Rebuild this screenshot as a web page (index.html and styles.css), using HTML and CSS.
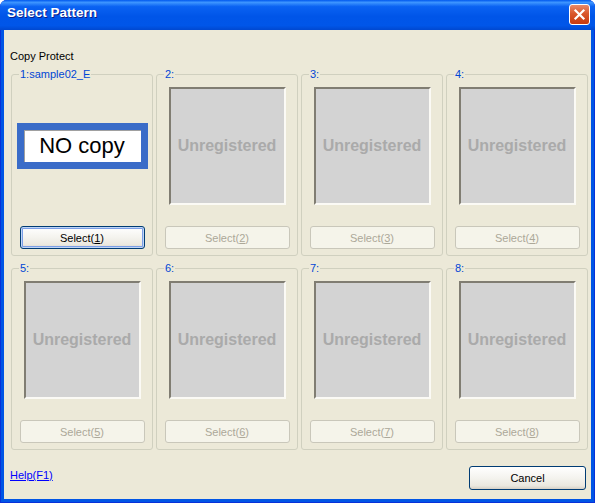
FILE: index.html
```html
<!DOCTYPE html>
<html lang="en">
<head>
    <meta charset="UTF-8">
    <meta name="viewport" content="width=device-width, initial-scale=1.0">
    <title>Select Pattern</title>
    <link rel="stylesheet" href="styles.css">
</head>
<body>
    <div class="window">
        <div class="titlebar">
            <span class="title">Select Pattern</span>
            <span class="close">
                <svg width="19" height="19" viewBox="0 0 19 19"><path d="M5.5 5.5 L13.5 13.5 M13.5 5.5 L5.5 13.5" stroke="#fff" stroke-width="2.2" stroke-linecap="square"/></svg>
            </span>
        </div>

        <div class="client">
            <div class="caption">Copy Protect</div>

            <div class="slots">
                <fieldset class="slot">
                    <legend>1:sample02_E</legend>
                    <div class="preview">
                        <div class="nocopy">NO copy</div>
                    </div>
                    <button class="btn focus">Select(<u>1</u>)</button>
                </fieldset>
                <fieldset class="slot">
                    <legend>2:</legend>
                    <div class="thumb">Unregistered</div>
                    <button class="btn" disabled>Select(<u>2</u>)</button>
                </fieldset>
                <fieldset class="slot">
                    <legend>3:</legend>
                    <div class="thumb">Unregistered</div>
                    <button class="btn" disabled>Select(<u>3</u>)</button>
                </fieldset>
                <fieldset class="slot">
                    <legend>4:</legend>
                    <div class="thumb">Unregistered</div>
                    <button class="btn" disabled>Select(<u>4</u>)</button>
                </fieldset>
                <fieldset class="slot">
                    <legend>5:</legend>
                    <div class="thumb">Unregistered</div>
                    <button class="btn" disabled>Select(<u>5</u>)</button>
                </fieldset>
                <fieldset class="slot">
                    <legend>6:</legend>
                    <div class="thumb">Unregistered</div>
                    <button class="btn" disabled>Select(<u>6</u>)</button>
                </fieldset>
                <fieldset class="slot">
                    <legend>7:</legend>
                    <div class="thumb">Unregistered</div>
                    <button class="btn" disabled>Select(<u>7</u>)</button>
                </fieldset>
                <fieldset class="slot">
                    <legend>8:</legend>
                    <div class="thumb">Unregistered</div>
                    <button class="btn" disabled>Select(<u>8</u>)</button>
                </fieldset>
            </div>

            <div class="footer">
                <a class="help" href="#">Help(F1)</a>
                <button class="btn cancel">Cancel</button>
            </div>
        </div>
    </div>
</body>
</html>
```

FILE: styles.css
```css
body {
    margin: 0;
    background: #fff;
    font-family: 'Liberation Sans', Arial, sans-serif;
    font-size: 11px;
    color: #000;
}

.window {
    width: 595px;
    height: 503px;
    display: flex;
    flex-direction: column;
    background: #0055e5;
    border-radius: 7px 7px 0 0;
    box-shadow: inset 1px 0 0 #0831d9, inset -1px 0 0 #0831d9, inset 0 -1px 0 #0831d9;
}

.titlebar {
    height: 30px;
    display: flex;
    justify-content: space-between;
    align-items: flex-start;
    padding: 0 5px 0 7px;
    border-radius: 7px 7px 0 0;
    background: linear-gradient(to bottom, #0058ee 0%, #3d95ff 8%, #0a62f2 22%, #0055e8 55%, #0056e9 85%, #0048d0 100%);
}

.title {
    margin-top: 5px;
    font-size: 13.5px;
    line-height: 16px;
    font-weight: bold;
    color: #fff;
    text-shadow: 1px 1px 0 #0a1e8a;
}

.close {
    margin-top: 4px;
    width: 19px;
    height: 19px;
    border: 1px solid #fff;
    border-radius: 3px;
    background: linear-gradient(to bottom, #e98a6b 0%, #d9572c 45%, #c83a10 100%);
    display: flex;
}

.client {
    height: 469px;
    margin: 0 4px 4px;
    background: #ece9d8;
    box-sizing: border-box;
}

.caption {
    padding: 20px 0 0 6px;
    line-height: 13px;
}

.slots {
    display: grid;
    grid-template-columns: repeat(4, 142px);
    column-gap: 3px;
    row-gap: 6px;
    margin: 5px 0 0 7px;
}

.slot {
    margin: 0;
    padding: 0 0 6px;
    min-width: 0;
    height: 188px;
    box-sizing: border-box;
    border: 1px solid #d0d0bf;
    border-radius: 3px;
    display: flex;
    flex-direction: column;
    align-items: center;
}

.slot legend {
    margin-left: 7px;
    padding: 0 1px;
    line-height: 13px;
    color: #0046d5;
}

.thumb {
    margin-top: 6px;
    width: 117px;
    height: 118px;
    box-sizing: border-box;
    border-top: 2px solid #807d72;
    border-left: 2px solid #807d72;
    border-right: 2px solid #fbfaf5;
    border-bottom: 2px solid #fbfaf5;
    background: #d3d3d3;
    color: #aaa;
    font-size: 16px;
    font-weight: bold;
    display: flex;
    align-items: center;
    justify-content: center;
}

.preview {
    margin-top: 6px;
    width: 131px;
    height: 118px;
    display: flex;
    align-items: center;
}

.nocopy {
    width: 131px;
    height: 46px;
    box-sizing: border-box;
    border: 7px solid #3a6cc8;
    background: #fff;
    box-shadow: inset 1px 1px 0 #a0a0a0;
    font-size: 22px;
    line-height: 32px;
    text-align: center;
    color: #000;
}

.btn {
    margin-top: auto;
    width: 125px;
    height: 23px;
    padding: 0;
    font-family: 'Liberation Sans', Arial, sans-serif;
    font-size: 11px;
    color: #000;
    border: 1px solid #003c74;
    border-radius: 3px;
    background: linear-gradient(to bottom, #ffffff 0%, #f4f3ee 50%, #ebe8df 85%, #d6d0c5 100%);
}

.btn.focus {
    box-shadow: inset 0 0 0 1px #c0d5f5, inset 0 0 0 2px #7b9ee6;
}

.btn:disabled {
    color: #aca899;
    border-color: #c9c7ba;
    background: #f5f4ea;
}

.footer {
    display: flex;
    justify-content: space-between;
    align-items: flex-start;
    margin-top: 16px;
    padding: 0 5px 0 6px;
}

.help {
    margin-top: 3px;
    line-height: 13px;
    color: #0000ff;
    text-decoration: underline;
}

.btn.cancel {
    width: 117px;
    height: 24px;
}
```
